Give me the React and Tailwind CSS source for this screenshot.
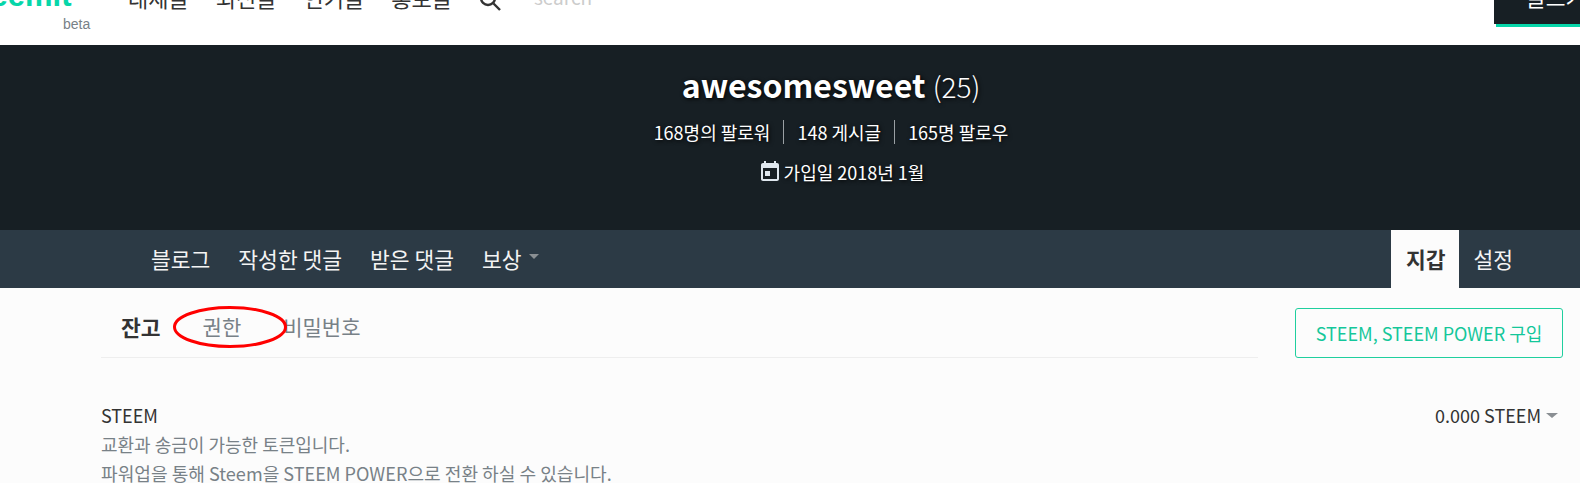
const topLinks = ["대세글", "최신글", "인기글", "홍보글"];
const navLinks = ["블로그", "작성한 댓글", "받은 댓글"];

export default function App() {
  return (
    <div className="h-[483px] overflow-hidden bg-[#fcfcfc] font-['Noto_Sans_CJK_KR',sans-serif] text-[#333]">
      {/* 상단 헤더, 스크롤되어 위가 잘림 */}
      <header className="flex h-[45px] overflow-hidden bg-white">
        <div className="w-[128px] shrink-0">
          <div className="-mt-[15px] -ml-[37px] h-[22px] font-['Liberation_Sans',sans-serif] text-[31px] leading-[22px] font-bold whitespace-nowrap text-[#06d6a9]">
            steemit
          </div>
          <div className="mt-[9px] ml-[63px] font-['Liberation_Sans',sans-serif] text-sm leading-4 text-[#788187]">
            beta
          </div>
        </div>
        <nav className="-mt-[17px] flex h-[28px] gap-[27px] text-[22px] leading-[28px] text-[#333]">
          {topLinks.map((t) => (
            <span key={t}>{t}</span>
          ))}
        </nav>
        <svg className="-mt-[10px] ml-[28px] h-[21px] w-[21px] text-[#333]" viewBox="0 0 21 21" fill="none" stroke="currentColor" strokeWidth="2.4">
          <circle cx="8" cy="8" r="7" />
          <path d="M13.5 13.5 20 20" />
        </svg>
        <div className="-mt-[15px] ml-[33px] h-6 text-[19px] leading-6 text-[#ccc]">search</div>
        <div className="ml-auto h-[27px] w-[84px] bg-[#06d6a9]">
          <div className="-ml-[2px] h-6 w-[86px] overflow-hidden bg-[#171f24] pl-[32px] text-[21.5px] leading-[12px] whitespace-nowrap text-white">
            <span className="-mt-[9px] block">글쓰기</span>
          </div>
        </div>
      </header>

      {/* 프로필 */}
      <section className="flex h-[185px] flex-col items-center bg-[#171f24] pl-[82px] text-white [text-shadow:1px_1px_4px_#000]">
        <h1 className="mt-[14px] text-[32px] leading-[50px] font-bold">
          awesomesweet <span className="text-[28px] font-light">(25)</span>
        </h1>
        <div className="mt-[9px] flex items-center text-[18px] leading-[24px]">
          <span className="border-r border-[#9aa0a4] pr-[13px]">168명의 팔로워</span>
          <span className="border-r border-[#9aa0a4] px-[13px]">148 게시글</span>
          <span className="pl-[13px]">165명 팔로우</span>
        </div>
        <div className="mt-[16px] ml-[20px] flex items-center gap-[2px] text-[18px] leading-[24px]">
          <svg className="h-[24px] w-[24px] text-[#dfe7ee]" viewBox="0 0 24 24" fill="currentColor">
            <path d="M7 11h5v5H7zM16 1v2H8V1H6v2H5c-1.11 0-1.99.9-1.99 2L3 19c0 1.1.89 2 2 2h14c1.1 0 2-.9 2-2V5c0-1.1-.9-2-2-2h-1V1h-2zm3 18H5V8h14v11z" />
          </svg>
          가입일 2018년 1월
        </div>
      </section>

      {/* 탭 */}
      <nav className="flex h-[58px] items-stretch bg-[#2c3a45] pr-[53px] pl-[137px] text-[21.5px] text-[#f4f4f4]">
        {navLinks.map((t) => (
          <a key={t} className="flex items-center px-[14px]">
            {t}
          </a>
        ))}
        <a className="flex items-center px-[14px]">
          보상
          <span className="mb-[6px] ml-[7px] h-0 w-0 border-x-[5px] border-t-[5px] border-x-transparent border-t-[#8a8f93]" />
        </a>
        <a className="ml-auto flex items-center bg-[#fcfcfc] pr-[14px] pl-[15px] font-bold text-[#333]">지갑</a>
        <a className="flex items-center px-[14px]">설정</a>
      </nav>

      {/* 지갑 */}
      <main className="relative flex pr-[17px] pl-[101px]">
        <div className="w-[1157px]">
          <div className="flex h-[70px] items-center gap-[42px] border-b border-[#eee] pt-[9px] pl-[20px] text-[21px] text-[#788187]">
            <b className="text-[21.5px] text-[#333]">잔고</b>
            <span>권한</span>
            <span>비밀번호</span>
          </div>
          <div className="mt-[43px] text-[18px] leading-[29px]">
            <div className="text-[#333]">STEEM</div>
            <div className="text-[#788187]">교환과 송금이 가능한 토큰입니다.</div>
            <div className="text-[18.1px] text-[#788187]">파워업을 통해 Steem을 STEEM POWER으로 전환 하실 수 있습니다.</div>
          </div>
        </div>
        <div className="ml-auto flex flex-col items-end">
          <button className="mt-[20px] h-[50px] w-[268px] rounded-[3px] border border-[#1fcf9e] text-[18px] text-[#14c79a]">
            STEEM, STEEM POWER 구입
          </button>
          <div className="mt-[43px] flex items-center gap-[5px] pr-[5px] text-[18px] leading-[29px] text-[#333]">
            0.000 STEEM
            <span className="h-0 w-0 border-x-[6px] border-t-[5px] border-x-transparent border-t-[#8a8f93]" />
          </div>
        </div>
        {/* 빨간 동그라미 표시 */}
        <svg className="absolute top-[17px] left-[172px] h-[44px] w-[116px]" viewBox="0 0 116 44" fill="none">
          <ellipse cx="58" cy="22" rx="55.5" ry="19.5" stroke="#f00" strokeWidth="3" />
        </svg>
      </main>
    </div>
  );
}
